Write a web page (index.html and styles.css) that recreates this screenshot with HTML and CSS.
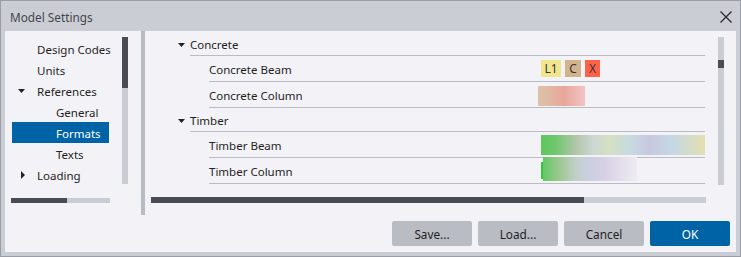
FILE: index.html
```html
<!DOCTYPE html>
<html>
<head>
<meta charset="utf-8">
<link rel="stylesheet" href="styles.css">
</head>
<body>
<div class="window">
  <div class="titlebar">
    <span class="title">Model Settings</span>
    <svg class="close" width="12" height="12" viewBox="0 0 12 12"><path d="M0.5 0.5 L11.5 11.5 M11.5 0.5 L0.5 11.5" stroke="#2b2b30" stroke-width="1.3" fill="none"/></svg>
  </div>
  <div class="content">
    <div class="main">
      <div class="left">
        <div class="left-top">
          <ul class="nav">
            <li class="nav-item lvl1"><span class="txt">Design Codes</span></li>
            <li class="nav-item lvl1"><span class="txt">Units</span></li>
            <li class="nav-item lvl1"><svg class="nav-caret" width="7" height="4" viewBox="0 0 7 4"><polygon points="0,0 7,0 3.5,4" fill="#222"/></svg><span class="txt">References</span></li>
            <li class="nav-item lvl2"><span class="txt">General</span></li>
            <li class="nav-item lvl2 selected"><span class="txt">Formats</span></li>
            <li class="nav-item lvl2"><span class="txt">Texts</span></li>
            <li class="nav-item lvl1"><svg class="nav-caret-side" width="4" height="8" viewBox="0 0 4 8"><polygon points="0,0 4,4 0,8" fill="#222"/></svg><span class="txt">Loading</span></li>
          </ul>
          <div class="vscroll left-v"><div class="vthumb left-vthumb"></div></div>
        </div>
        <div class="hscroll left-h"><div class="hthumb left-hthumb"></div></div>
      </div>
      <div class="splitter"></div>
      <div class="right-pane">
        <div class="right-top">
          <div class="tree">
            <div class="row group">
              <span class="caret"><svg width="7" height="4" viewBox="0 0 7 4"><polygon points="0,0 7,0 3.5,4" fill="#222"/></svg></span>
              <div class="cell"><span class="txt">Concrete</span></div>
            </div>
            <div class="row item">
              <div class="cell">
                <span class="label txt">Concrete Beam</span>
                <span class="value">
                  <span class="badge badge-l1">L1</span>
                  <span class="badge badge-c">C</span>
                  <span class="badge badge-x">X</span>
                </span>
              </div>
            </div>
            <div class="row item">
              <div class="cell">
                <span class="label txt">Concrete Column</span>
                <span class="value"><span class="grad grad-concrete"></span></span>
              </div>
            </div>
            <div class="row group">
              <span class="caret"><svg width="7" height="4" viewBox="0 0 7 4"><polygon points="0,0 7,0 3.5,4" fill="#222"/></svg></span>
              <div class="cell"><span class="txt">Timber</span></div>
            </div>
            <div class="row item">
              <div class="cell">
                <span class="label txt">Timber Beam</span>
                <span class="value"><span class="grad grad-tbeam"></span></span>
              </div>
            </div>
            <div class="row item">
              <div class="cell">
                <span class="label txt">Timber Column</span>
                <span class="value"><span class="greenbar"></span><span class="grad grad-tcol"></span></span>
              </div>
            </div>
          </div>
          <div class="vscroll right-v"><div class="vthumb right-vthumb"></div></div>
        </div>
        <div class="hscroll right-h"><div class="hthumb right-hthumb"></div></div>
      </div>
    </div>
    <div class="buttons">
      <button class="btn">Save...</button>
      <button class="btn">Load...</button>
      <button class="btn">Cancel</button>
      <button class="btn primary">OK</button>
    </div>
  </div>
</div>
</body>
</html>
```
FILE: styles.css
```css
* { box-sizing: border-box; }
html, body { margin: 0; padding: 0; background: #cbcdd4; }
body { font-family: "Noto Sans", "Open Sans", sans-serif; font-size: 11.5px; color: #1f1f24; }

.window {
  width: 741px;
  height: 257px;
  border: 1px solid #9a9da6;
  background: #cbcdd4;
  padding: 0 4px 4px 4px;
  display: flex;
  flex-direction: column;
}

.titlebar {
  height: 30px;
  display: flex;
  align-items: center;
  justify-content: space-between;
  padding: 0 4px 0 5px;
}
.title { color: #45464e; font-size: 11.8px; margin-top: 2px; }
.close { margin-top: 2px; }

.content {
  height: 221px;
  background: #f2f2f7;
  display: flex;
  flex-direction: column;
}

.main { height: 184px; display: flex; }

.txt { position: relative; top: 1px; }

.left { width: 136px; }
.left-top { display: flex; padding-top: 6px; }
.nav { list-style: none; margin: 1px 0 0 7px; padding: 0; width: 97px; }
.nav-item { height: 21px; line-height: 21px; white-space: nowrap; display: flex; align-items: center; }
.lvl1 { padding-left: 25px; }
.lvl2 { padding-left: 44px; }
.nav-item.selected { background: #0063a6; color: #ffffff; }
.nav-caret { flex: none; margin-left: -19px; margin-right: 12px; }
.nav-caret-side { flex: none; margin-left: -16px; margin-right: 12px; }

.vscroll { width: 6px; background: #c9ccd3; }
.vthumb { width: 6px; background: #494c54; }
.left-v { height: 147px; margin-left: 13px; }
.left-vthumb { height: 51px; }

.hscroll { height: 5px; background: #c9ccd3; }
.hthumb { height: 100%; background: #494c54; }
.left-h { width: 99px; margin: 13px 0 0 6px; }
.left-hthumb { width: 56px; }

.splitter { width: 4px; background: #b9bbc2; }

.right-pane { width: 591px; }
.right-top { display: flex; }
.tree { width: 535px; margin-left: 25px; padding-top: 1px; }
.row { display: flex; }
.row .cell { flex: 1; border-bottom: 1px solid #bbbbc3; display: flex; align-items: center; }
.group .cell { height: 24px; }
.item { padding-left: 39px; }
.item .cell { height: 26px; }
.caret { width: 20px; display: flex; align-items: center; padding-left: 8px; padding-top: 1px; }
.label { width: 332px; }
.value { display: flex; align-items: center; height: 100%; }

.badge { height: 17px; line-height: 17px; text-align: center; margin-right: 4px; color: #3a3240; font-size: 12px; }
.badge-l1 { width: 20px; background: #f0e68c; }
.badge-c { width: 16px; background: #d2b48c; }
.badge-x { width: 15px; background: #ff6347; }

.grad { display: block; height: 20px; }
.grad-concrete { width: 47px; margin-left: -3px; margin-top: 3px; background: linear-gradient(to right, #d9c4aa 0%, #e4b09e 40%, #e9a69a 55%, #f3c4c3 100%); }
.grad-tbeam { width: 164px; margin-top: 1px; background: linear-gradient(to right, #5cc85c 0%, #6cc86a 8%, #b4c6ac 22%, #ccd8d2 32%, #d6e0c2 42%, #c6dae0 54%, #c8c8e0 66%, #c4d8e4 80%, #e4e0b0 100%); }
.greenbar { display: block; width: 2px; height: 17px; background: #33c93a; }
.grad-tcol { width: 94px; height: 24px; align-self: flex-start; margin-top: -1px; background: linear-gradient(to right, #64c864 0%, #a4c898 20%, #c2d0c8 35%, #c8d0e0 48%, #d8d0e4 66%, #eeecf2 100%); }

.right-v { height: 148px; margin: 6px 0 0 13px; }
.right-vthumb { height: 8px; margin-top: 23px; }
.right-h { width: 555px; height: 6px; margin: 12px 0 0 6px; }
.right-hthumb { width: 433px; }

.buttons { display: flex; justify-content: flex-end; gap: 6px; padding: 6px 6px 0 0; }
.btn {
  width: 80px;
  height: 25px;
  border: none;
  border-radius: 2px;
  background: #babcc4;
  font-family: "Noto Sans", "Open Sans", sans-serif;
  font-size: 11.8px;
  color: #1f1f24;
  padding: 0;
}
.btn.primary { background: #0063a6; color: #ffffff; }
```
